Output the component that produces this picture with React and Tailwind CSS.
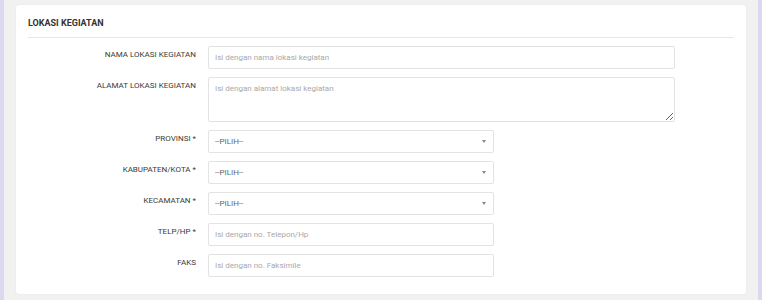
export default function App() {
  const selects = ["PROVINSI *", "KABUPATEN/KOTA *", "KECAMATAN *"];

  return (
    <div
      className="h-[300px] w-[762px] overflow-hidden bg-[#dcd8f0] px-[4px]"
      style={{ fontFamily: "Roboto, 'Liberation Sans', sans-serif" }}
    >
      <div className="h-full bg-[#f1f1f1] px-[12px] pt-[5px]">
        <div className="h-[289px] rounded-[3px] bg-white px-[12px] pt-[14px] shadow-[0_0_2px_rgba(0,0,0,0.06)]">
          <div className="pb-[9px] text-[9px] font-bold leading-none text-[#333]">LOKASI KEGIATAN</div>
          <div className="border-b border-[#e6e6e6]"></div>

          <div className="flex flex-col gap-[8px] pt-[8px]">
            <Row label="NAMA LOKASI KEGIATAN">
              <input
                className="block h-[23px] w-[467px] rounded-[2px] border border-[#e3e3e3] px-[6px] text-[8px] text-[#555] outline-none placeholder:text-[#a8a8a8]"
                placeholder="Isi dengan nama lokasi kegiatan"
              />
            </Row>
            <Row label="ALAMAT LOKASI KEGIATAN">
              <textarea
                className="block h-[45px] w-[467px] resize-y rounded-[2px] border border-[#e3e3e3] px-[6px] py-[5px] text-[8px] text-[#555] outline-none placeholder:text-[#a8a8a8]"
                placeholder="Isi dengan alamat lokasi kegiatan"
              />
            </Row>
            {selects.map((s) => (
              <Row key={s} label={s}>
                <div className="flex h-[23px] w-[286px] items-center justify-between rounded-[2px] border border-[#e3e3e3] pl-[6px] pr-[7px] text-[8px] text-[#666]">
                  <span>--PILIH--</span>
                  <span className="h-0 w-0 border-x-[2.5px] border-t-[3px] border-x-transparent border-t-[#888]"></span>
                </div>
              </Row>
            ))}
            <Row label="TELP/HP *">
              <input
                className="block h-[23px] w-[286px] rounded-[2px] border border-[#e3e3e3] px-[6px] text-[8px] text-[#555] outline-none placeholder:text-[#a8a8a8]"
                placeholder="Isi dengan no. Telepon/Hp"
              />
            </Row>
            <Row label="FAKS">
              <input
                className="block h-[23px] w-[286px] rounded-[2px] border border-[#e3e3e3] px-[6px] text-[8px] text-[#555] outline-none placeholder:text-[#a8a8a8]"
                placeholder="Isi dengan no. Faksimile"
              />
            </Row>
          </div>
        </div>
      </div>
    </div>
  );
}

function Row({ label, children }) {
  return (
    <div className="flex items-start">
      <label className="w-[168px] shrink-0 pt-[4px] text-right text-[8px] leading-[10px] text-[#3a3a3a]">
        {label}
      </label>
      <div className="ml-[12px]">{children}</div>
    </div>
  );
}
